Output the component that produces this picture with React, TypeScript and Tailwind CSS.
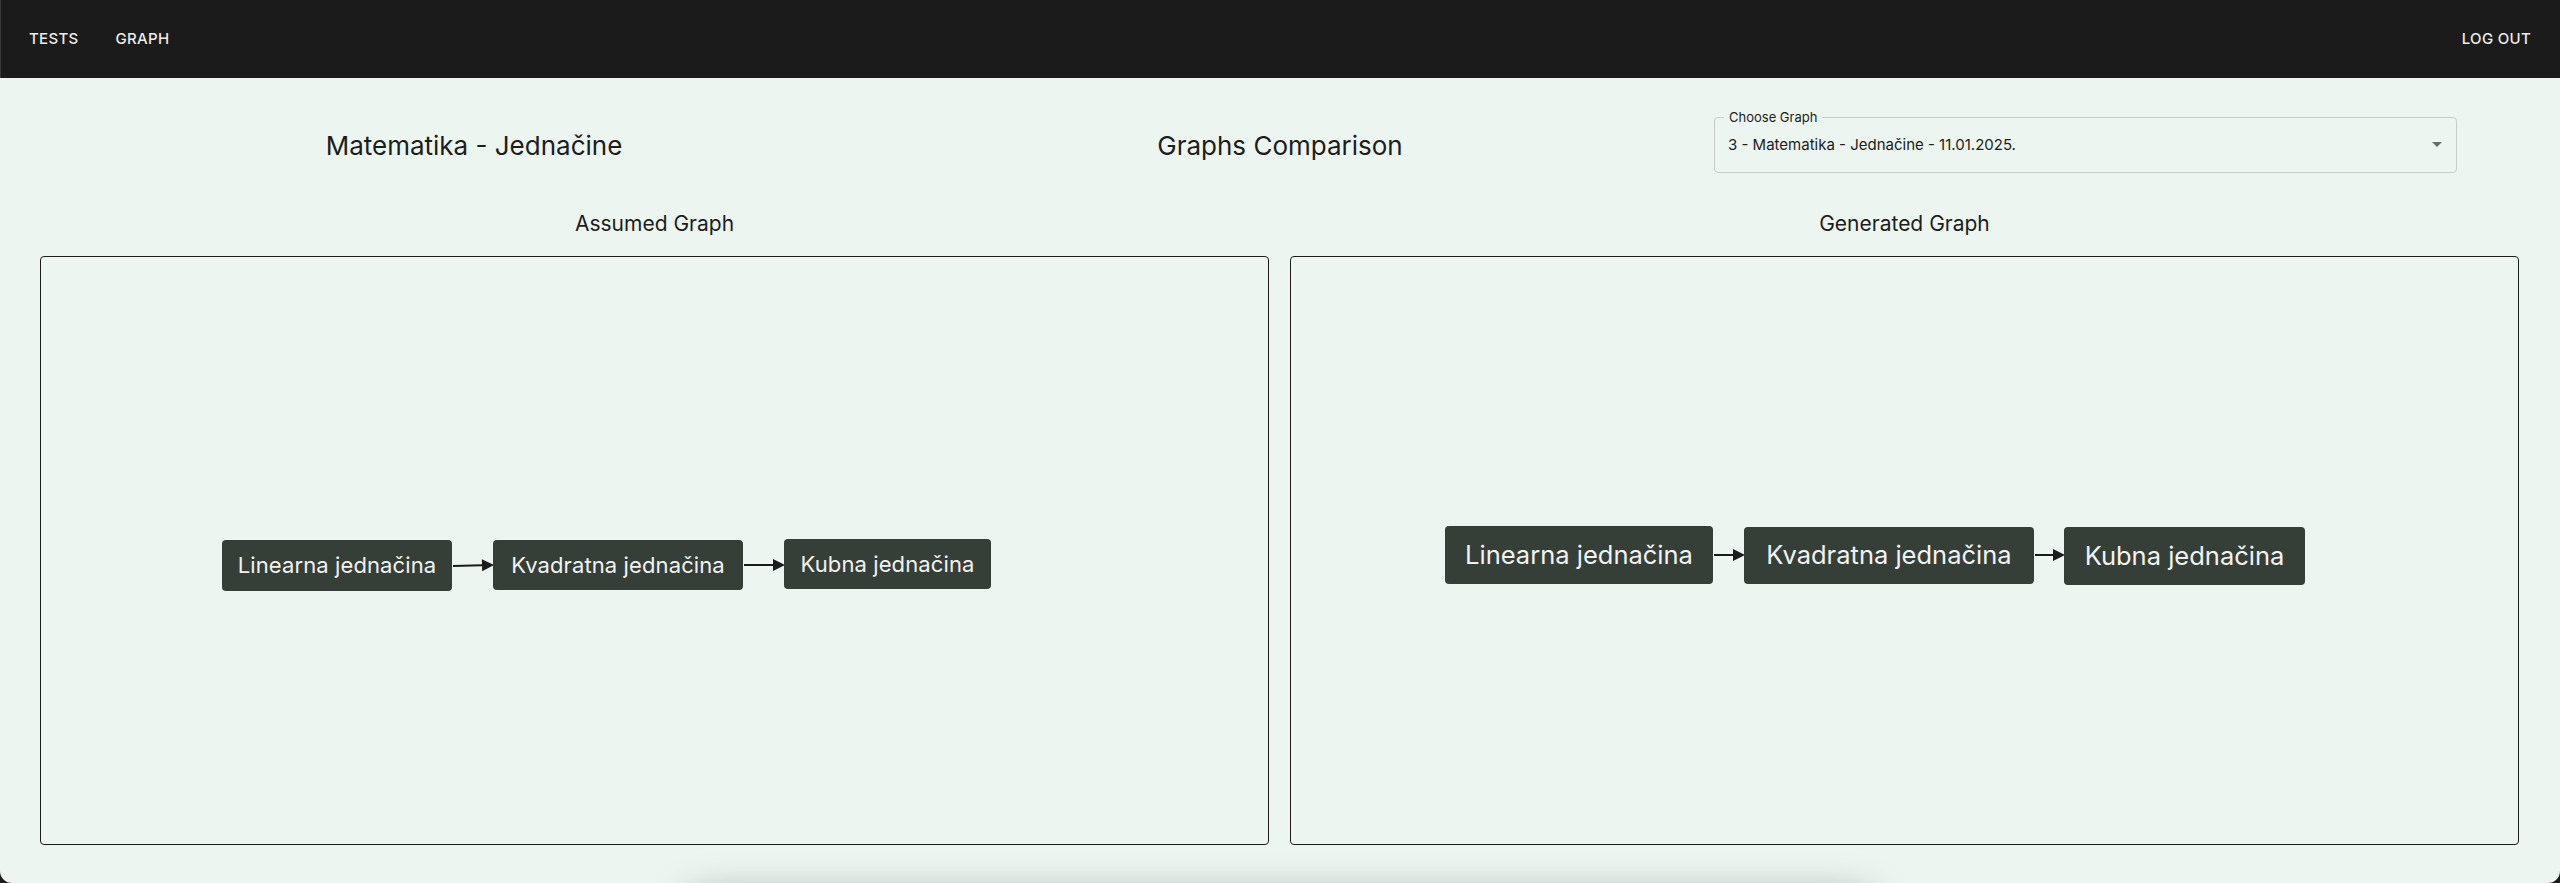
import React from "react";

const FONT = "font-['Inter','Noto_Sans',sans-serif]";

function Node({ label, x, y, w, h, size }: { label: string; x: number; y: number; w: number; h: number; size: string }) {
  return (
    <div
      className={`absolute flex items-center justify-center rounded-[4px] bg-[#353f38] text-[#f2f2f2] ${size}`}
      style={{ left: x, top: y, width: w, height: h }}
    >
      {label}
    </div>
  );
}

function Edge({ x1, y1, x2, y2 }: { x1: number; y1: number; x2: number; y2: number }) {
  const ang = Math.atan2(y2 - y1, x2 - x1);
  const L = 12;
  const W = 6;
  const bx = x2 - L * Math.cos(ang);
  const by = y2 - L * Math.sin(ang);
  const p1 = `${bx - W * Math.sin(ang)},${by + W * Math.cos(ang)}`;
  const p2 = `${bx + W * Math.sin(ang)},${by - W * Math.cos(ang)}`;
  return (
    <g>
      <line x1={x1} y1={y1} x2={bx} y2={by} stroke="#1b1b1b" strokeWidth={2} />
      <polygon points={`${x2},${y2} ${p1} ${p2}`} fill="#1b1b1b" />
    </g>
  );
}

function GraphBox({ small }: { small: boolean }) {
  return (
    <div className="relative h-[589px] w-[1229px] rounded-[4px] border-[1.5px] border-[#1c1c1c]">
      <svg className="absolute inset-0 h-full w-full" xmlns="http://www.w3.org/2000/svg">
        {small ? (
          <>
            <Edge x1={412} y1={309} x2={453} y2={308} />
            <Edge x1={703} y1={308} x2={744} y2={308} />
          </>
        ) : (
          <>
            <Edge x1={423} y1={298} x2={454} y2={298} />
            <Edge x1={744} y1={298} x2={774} y2={298} />
          </>
        )}
      </svg>
      {small ? (
        <>
          <Node label="Linearna jednačina" x={181} y={283} w={230} h={51} size="text-[22px] tracking-[0.005em]" />
          <Node label="Kvadratna jednačina" x={452} y={283} w={250} h={50} size="text-[22px] tracking-[0.005em]" />
          <Node label="Kubna jednačina" x={743} y={282} w={207} h={50} size="text-[22px] tracking-[0.005em]" />
        </>
      ) : (
        <>
          <Node label="Linearna jednačina" x={154} y={269} w={268} h={58} size="text-[25.5px]" />
          <Node label="Kvadratna jednačina" x={453} y={270} w={290} h={57} size="text-[25.5px]" />
          <Node label="Kubna jednačina" x={773} y={270} w={241} h={58} size="text-[25.5px]" />
        </>
      )}
    </div>
  );
}

export default function App() {
  return (
    <div className={`h-[883px] w-[2560px] overflow-hidden bg-[#1b1b1b] ${FONT}`}>
      <header className="flex h-[78px] items-center justify-between border-l border-[#3a3a3a] bg-[#1b1b1b] pl-[20px] pr-[21px] text-[15px] font-medium tracking-[0.02em] text-[#ececec]">
        <nav className="flex items-center gap-[21px]">
          <span className="px-[8px] py-[6px]">TESTS</span>
          <span className="px-[8px] py-[6px]">GRAPH</span>
        </nav>
        <span className="px-[8px] py-[6px]">LOG OUT</span>
      </header>
      <main className="flex h-[805px] flex-col overflow-hidden rounded-b-[12px] bg-[#ecf5f0] text-[#1d1d1d]">
        <div className="mt-[39px] flex h-[56px] items-center pl-[40px]">
          <div className="w-[868px] text-center text-[26px]">Matematika - Jednačine</div>
          <div className="w-[744px] text-center text-[26px]">Graphs Comparison</div>
          <div className="relative ml-[62px] flex h-[56px] w-[743px] items-center rounded-[4px] border border-[#c7ccc9] pl-[13px] pr-[14px]">
            <span className="absolute -top-[8px] left-[9px] bg-[#ecf5f0] px-[5px] text-[13px] leading-[14px] text-[#1d1d1d]">
              Choose Graph
            </span>
            <span className="flex-1 text-[15px]">3 - Matematika - Jednačine - 11.01.2025.</span>
            <svg width="10" height="6" viewBox="0 0 10 6">
              <polygon points="0,0 10,0 5,5" fill="#6b6b6b" />
            </svg>
          </div>
        </div>
        <div className="mt-[38px] flex gap-[21px] px-[40px]">
          <div className="flex w-[1229px] flex-col">
            <div className="mb-[19px] text-center text-[21px] leading-[26px]">Assumed Graph</div>
            <GraphBox small />
          </div>
          <div className="flex w-[1229px] flex-col">
            <div className="mb-[19px] text-center text-[21px] leading-[26px]">Generated Graph</div>
            <GraphBox small={false} />
          </div>
        </div>
        <div className="mx-auto mt-[52px] h-[200px] w-[1180px] shrink-0 rounded-[8px] bg-[#ecf5f0] shadow-[0_0_40px_rgba(0,0,0,0.35)]" />
      </main>
    </div>
  );
}
